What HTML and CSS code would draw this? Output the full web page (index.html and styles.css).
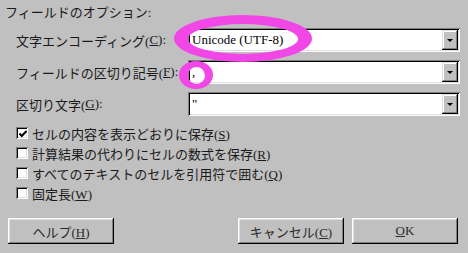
FILE: index.html
```html
<!DOCTYPE html>
<html lang="ja">
<head>
<meta charset="utf-8">
<title>フィールドのオプション</title>
<link rel="stylesheet" href="styles.css">
</head>
<body>
<div class="dialog">
  <div class="title">フィールドのオプション:</div>
  <div class="fields">
    <label class="lbl">文字エンコーディング(<u>C</u>):</label>
    <div class="combo"><span class="value">Unicode (UTF-8)</span><span class="drop"><i class="tri"></i></span></div>
    <label class="lbl">フィールドの区切り記号(<u>F</u>):</label>
    <div class="combo"><span class="value">,</span><span class="drop"><i class="tri"></i></span></div>
    <label class="lbl">区切り文字(<u>G</u>):</label>
    <div class="combo"><span class="value">&quot;</span><span class="drop"><i class="tri"></i></span></div>
  </div>
  <div class="checks">
    <div class="check"><span class="box"><svg width="8" height="8" viewBox="0 0 8 8"><polyline points="0.5,3.5 2.8,6 7.5,1" fill="none" stroke="#000" stroke-width="2"/></svg></span><span class="ctext">セルの内容を表示どおりに保存(<u>S</u>)</span></div>
    <div class="check"><span class="box"></span><span class="ctext">計算結果の代わりにセルの数式を保存(<u>R</u>)</span></div>
    <div class="check"><span class="box"></span><span class="ctext">すべてのテキストのセルを引用符で囲む(<u>Q</u>)</span></div>
    <div class="check"><span class="box"></span><span class="ctext">固定長(<u>W</u>)</span></div>
  </div>
  <div class="buttons">
    <button class="btn">ヘルプ(<u>H</u>)</button>
    <div class="group">
      <button class="btn">キャンセル(<u>C</u>)</button>
      <button class="btn"><u>O</u>K</button>
    </div>
  </div>
  <svg class="marks" width="468" height="253" viewBox="0 0 468 253">
    <path fill="#f247e7" fill-rule="evenodd" d="M174,38.5 a69,23.5 0 1,0 138,0 a69,23.5 0 1,0 -138,0 Z M188,39 a55,15 0 1,0 110,0 a55,15 0 1,0 -110,0 Z"/>
    <path fill="#f247e7" fill-rule="evenodd" d="M179,75 a17,14 0 1,0 34,0 a17,14 0 1,0 -34,0 Z M188,75.5 a8.5,8.5 0 1,0 17,0 a8.5,8.5 0 1,0 -17,0 Z"/>
  </svg>
</div>
</body>
</html>
```
FILE: styles.css
```css
* { box-sizing: border-box; }
html, body {
  margin: 0;
  padding: 0;
  background: #c0c0c0;
}
body {
  font-family: "Liberation Serif", "Noto Sans CJK JP", serif;
  font-size: 13px;
  color: #1a1a1a;
}
.dialog {
  position: relative;
  width: 468px;
  height: 253px;
  padding-top: 5px;
  overflow: hidden;
}
.title {
  margin-left: 5px;
  height: 16px;
  line-height: 16px;
  white-space: nowrap;
}
.fields {
  display: grid;
  grid-template-columns: 172px 272px;
  grid-auto-rows: 24px;
  row-gap: 8px;
  margin: 7px 0 0 16px;
}
.lbl {
  display: flex;
  align-items: center;
  white-space: nowrap;
}
.combo {
  display: flex;
  align-items: stretch;
  background: #fff;
  box-shadow: inset 1px 1px #808080, inset -1px -1px #fff, inset 2px 2px #000, inset -2px -2px #dfdfdf;
  padding: 2px;
}
.value {
  flex: 1;
  padding-left: 2px;
  line-height: 20px;
  color: #000;
  font-family: "Liberation Serif", serif;
}
.drop {
  width: 16px;
  background: #c0c0c0;
  box-shadow: inset -1px -1px #000, inset 1px 1px #dfdfdf, inset -2px -2px #808080, inset 2px 2px #fff;
  display: flex;
  align-items: center;
  justify-content: center;
}
.tri {
  width: 0;
  height: 0;
  border-left: 3px solid transparent;
  border-right: 3px solid transparent;
  border-top: 3px solid #000;
}
.checks {
  margin-top: 7px;
  padding-left: 16px;
}
.check {
  display: flex;
  align-items: center;
  height: 20px;
  gap: 4px;
  white-space: nowrap;
}
.box {
  width: 12px;
  height: 12px;
  background: #fff;
  box-shadow: inset 1px 1px #808080, inset -1px -1px #fff, inset 2px 2px #000, inset -2px -2px #dfdfdf;
  display: flex;
  align-items: center;
  justify-content: center;
  padding: 1px 0 0 1px;
}
.box svg { display: block; }
.buttons {
  display: flex;
  justify-content: space-between;
  margin-top: 15px;
  padding: 0 10px 0 8px;
}
.group {
  display: flex;
  gap: 8px;
}
.btn {
  width: 106px;
  height: 26px;
  background: #c0c0c0;
  border: none;
  font: inherit;
  color: #2a2a2a;
  box-shadow: inset -1px -1px #000, inset 1px 1px #fff, inset -2px -2px #808080, inset 2px 2px #dfdfdf;
  padding: 0;
  white-space: nowrap;
}
.marks {
  position: absolute;
  left: 0;
  top: 0;
  pointer-events: none;
}
```
